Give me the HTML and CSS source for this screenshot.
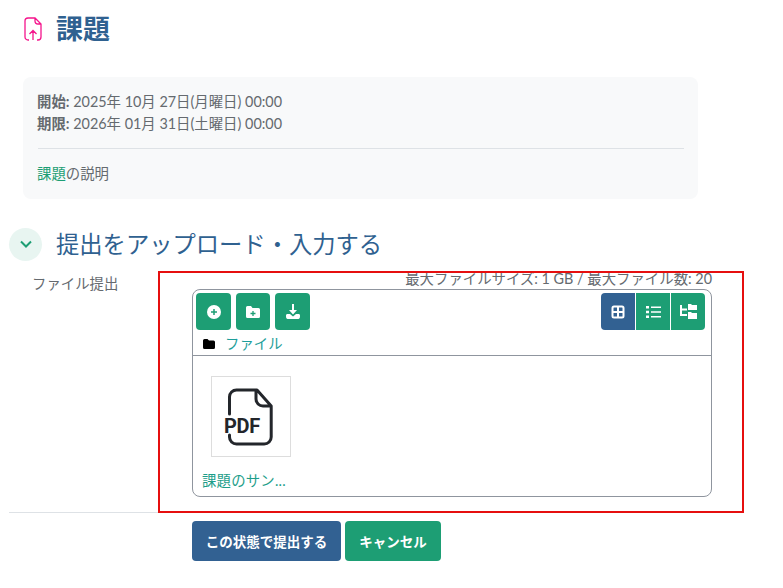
FILE: index.html
```html
<!DOCTYPE html>
<html lang="ja">
<head>
<meta charset="utf-8">
<title>課題</title>
<link rel="stylesheet" href="styles.css">
</head>
<body>
<header class="page-head">
  <svg class="mod-icon" width="18" height="24" viewBox="0 0 18 24" fill="none" stroke="#f5148c" stroke-width="1.300"><path d="M4 1h7l6 6v13a3 3 0 0 1-3 3h-1M5 23H4a3 3 0 0 1-3-3V4a3 3 0 0 1 3-3M11 1v3a3 3 0 0 0 3 3h3M9 23v-9M5.500 17 9 13.500l3.500 3.500"/></svg>
  <h1 class="page-title">課題</h1>
</header>
<section class="info-card">
  <div class="dates">
    <div><b>開始:</b> 2025年 10月 27日(月曜日) 00:00</div>
    <div><b>期限:</b> 2026年 01月 31日(土曜日) 00:00</div>
  </div>
  <hr class="info-rule">
  <div class="desc"><span class="link">課題</span>の説明</div>
</section>
<div class="section-head">
  <span class="toggle"><svg width="14" height="9" viewBox="0 0 14 9" fill="none" stroke="#1d9e74" stroke-width="2"><path d="M2 1.500 7 6.500l5-5"/></svg></span>
  <h2 class="section-title">提出をアップロード・入力する</h2>
</div>
<form class="form">
  <div class="form-row">
    <div class="form-label">ファイル提出</div>
    <div class="form-field">
      <div class="limits">最大ファイルサイズ: 1 GB / 最大ファイル数: 20</div>
      <div class="fm">
        <div class="fm-top">
          <div class="toolbar">
            <div class="tools">
              <span class="btn tool"><svg width="16" height="16" viewBox="0 0 16 16"><circle cx="8" cy="8" r="7" fill="#fff"/><path d="M8 5v6M5 8h6" stroke="#1d9e74" stroke-width="1.500"/></svg></span>
              <span class="btn tool tool-mid"><svg width="16" height="14" viewBox="0 0 16 14"><path d="M1 2.500A1.500 1.500 0 0 1 2.500 1H6l1.500 2h6A1.500 1.500 0 0 1 15 4.500v7a1.500 1.500 0 0 1-1.500 1.500h-11A1.500 1.500 0 0 1 1 11.500z" fill="#fff"/><path d="M8 6v5M5.500 8.500h5" stroke="#1d9e74" stroke-width="1.300"/></svg></span>
              <span class="btn tool"><svg width="16" height="16" viewBox="0 0 16 16" fill="#fff"><path d="M7 0h2v6h3L8 10.500 4 6h3z"/><path d="M1 11.500c0-1 .7-1.500 1.500-1.500H5l3 2.500L11 10h2.500c.8 0 1.500.5 1.500 1.500S15 15 13.500 15h-11C1 15 1 12.500 1 11.500z"/></svg></span>
            </div>
            <div class="views">
              <span class="btn view active"><svg width="14" height="14" viewBox="0 0 14 14" fill="none" stroke="#fff" stroke-width="2"><rect x="1.500" y="1.500" width="11" height="11" rx="1.500"/><path d="M7 1v12M1 7h12"/></svg></span>
              <span class="btn view"><svg width="15" height="12" viewBox="0 0 15 12" fill="#fff"><path d="M0 0h3v2.500H0zM5 .5h10v1.500H5zM0 4.700h3v2.500H0zM5 5.200h10v1.500H5zM0 9.400h3v2.500H0zM5 9.900h10v1.500H5z"/></svg></span>
              <span class="btn view"><svg width="17" height="15" viewBox="0 0 17 15" fill="#fff"><path d="M0 1h2v9h5v2H0zM2 4.500h5v2H2zM8 0h3l1 1h5v5H8zM8 8h3l1 1h5v6H8z"/></svg></span>
            </div>
          </div>
          <div class="crumb">
            <svg width="12" height="10" viewBox="0 0 12 10"><path d="M0 1.500A1.500 1.500 0 0 1 1.500 0H4.500l1.500 1.500h4.500A1.500 1.500 0 0 1 12 3v5.500A1.500 1.500 0 0 1 10.500 10h-9A1.500 1.500 0 0 1 0 8.500z" fill="#000"/></svg>
            <span class="crumb-text">ファイル</span>
          </div>
        </div>
        <div class="fm-body">
          <div class="file">
            <div class="thumb">
              <svg width="48" height="58" viewBox="0 0 48 58" fill="none" stroke="#23262b" stroke-width="3" stroke-linecap="round" stroke-linejoin="round">
                <path d="M2.500 26V9a7 7 0 0 1 7-7H30L44.200 18V49a7 7 0 0 1-7 7H9.500a7 7 0 0 1-7-7v-2M29 2v9a7 7 0 0 0 7 7h8"/>
              </svg>
              <span class="pdf">PDF</span>
            </div>
            <div class="file-name">課題のサン...</div>
          </div>
        </div>
      </div>
    </div>
  </div>
  <hr class="form-rule">
  <div class="actions">
    <button type="button" class="btn action primary">この状態で提出する</button>
    <button type="button" class="btn action secondary">キャンセル</button>
  </div>
</form>
<div class="highlight"></div>
</body>
</html>
```
FILE: styles.css
```css
* { box-sizing: border-box; }
html, body { margin: 0; padding: 0; }
body {
  position: relative;
  width: 783px;
  height: 588px;
  overflow: hidden;
  background: #fff;
  color: #656a6f;
  font-family: "Lato", "Noto Sans CJK JP", sans-serif;
  font-size: 14.400px;
  line-height: 22px;
}
.page-head {
  display: flex;
  align-items: center;
  gap: 15px;
  height: 58px;
  padding-left: 24px;
}
.mod-icon { flex: none; }
.page-title {
  margin: 0 0 0 -1px;
  font-size: 27px;
  line-height: 36px;
  font-weight: 700;
  color: #2f6190;
}
.info-card {
  width: 675px;
  height: 122px;
  margin: 19px 0 0 23px;
  padding: 14px 14px 0 14px;
  background: #f8f9fa;
  border-radius: 8px;
}
.dates b { font-weight: 700; }
.info-rule {
  height: 1px;
  margin: 13px 0 14px 1px;
  border: 0;
  background: #dee2e6;
}
.link { color: #1d9e74; }
.section-head {
  display: flex;
  align-items: center;
  gap: 14px;
  margin: 29px 0 0 9px;
  height: 33px;
}
.toggle {
  display: flex;
  align-items: center;
  justify-content: center;
  width: 33px;
  height: 33px;
  border-radius: 50%;
  background: #e8f5f1;
}
.section-title {
  margin: -2px 0 0;
  font-size: 23.300px;
  font-weight: 400;
  line-height: 32px;
  color: #2f6190;
}
.form { margin: 0; }
.form-row {
  display: flex;
  padding-top: 10px;
}
.form-label {
  width: 192px;
  padding: 2px 0 0 32px;
}
.form-field { width: 520px; }
.limits { height: 18px; margin-top: -3px; text-align: right; white-space: nowrap; }
.fm {
  height: 208px;
  margin-top: 3px;
  border: 1px solid #8f959e;
  border-radius: 8px;
}
.fm-top { height: 66px; border-bottom: 1px solid #8f959e; }
.toolbar {
  display: flex;
  justify-content: space-between;
  padding: 3px 6px 0 3px;
}
.tools { display: flex; gap: 5px; }
.views { display: flex; gap: 1px; }
.btn {
  display: flex;
  align-items: center;
  justify-content: center;
  background: #1d9e74;
  border-radius: 4px;
  color: #fff;
}
.tool { width: 35px; height: 37px; }
.tool-mid { width: 34px; }
.view { width: 34px; height: 37px; border-radius: 0; }
.view.active { background: #326192; border-radius: 4px 0 0 4px; }
.view:last-child { border-radius: 0 4px 4px 0; }
.crumb {
  display: flex;
  align-items: center;
  height: 25px;
  padding: 3px 0 0 10px;
}
.crumb-text { margin-left: 10px; color: #1d9e9a; font-size: 14.400px; }
.fm-body { padding: 20px 0 0 10px; }
.file { width: 110px; }
.thumb {
  position: relative;
  display: flex;
  align-items: center;
  justify-content: center;
  width: 80px;
  height: 81px;
  margin-left: 8px;
  border: 1px solid #dddddd;
}
.pdf {
  position: absolute;
  left: 12px;
  top: 37px;
  color: #23262b;
  font-family: "Roboto", sans-serif;
  font-weight: 700;
  font-size: 20px;
  line-height: 24px;
  letter-spacing: -0.300px;
}
.file-name { margin: 13px 0 0 -1px; color: #1d9e8a; white-space: nowrap; letter-spacing: 0.200px; }
.form-rule {
  width: 735px;
  height: 1px;
  margin: 15px 0 8px 9px;
  border: 0;
  background: #dee2e6;
}
.actions { display: flex; gap: 4px; padding-left: 192px; }
.action {
  height: 40px;
  border: 0;
  padding: 0;
  font-family: inherit;
  font-size: 13.500px;
  font-weight: 700;
  white-space: nowrap;
}
.primary { width: 149px; background: #326192; }
.secondary { width: 96px; }
.highlight {
  position: absolute;
  left: 158px;
  top: 271px;
  width: 586px;
  height: 242px;
  border: 2px solid #e60f0f;
  pointer-events: none;
}
```
